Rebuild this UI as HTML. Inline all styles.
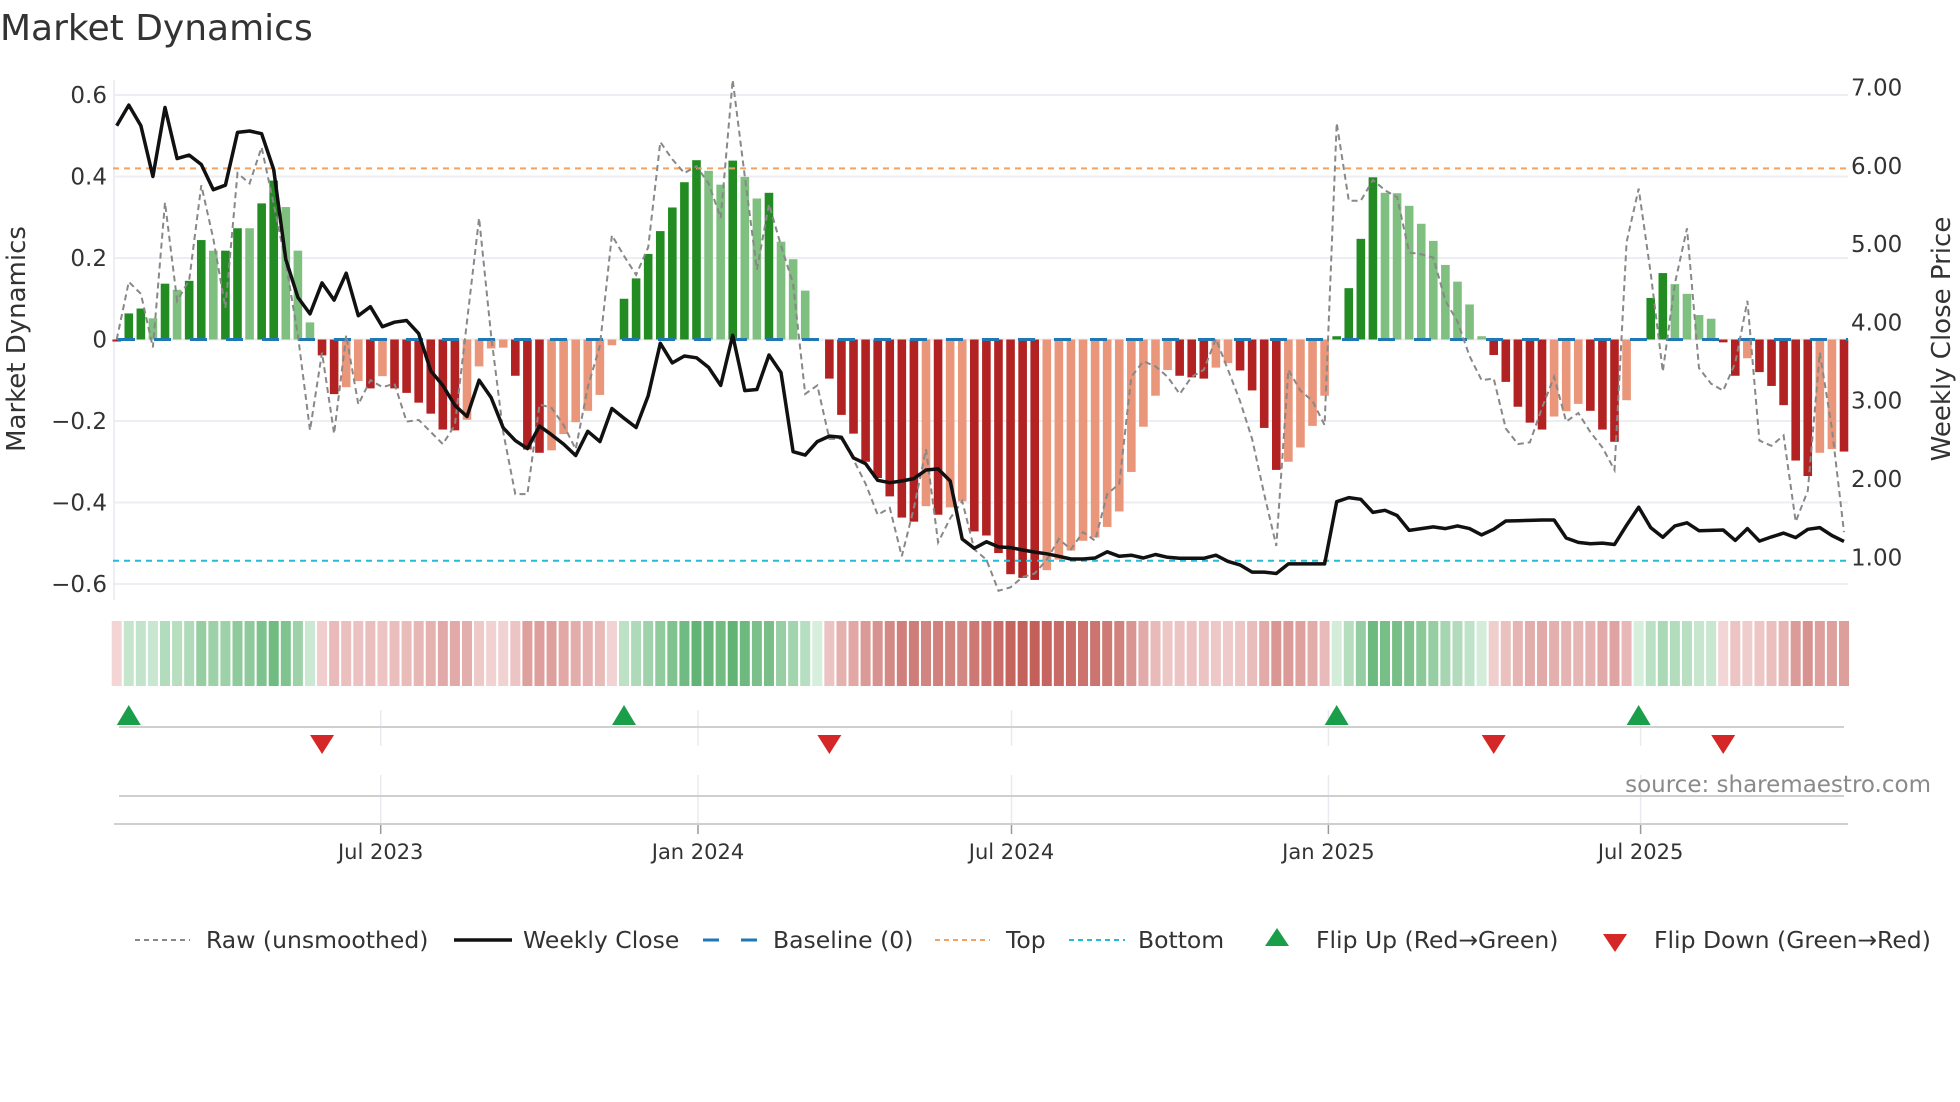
<!DOCTYPE html>
<html><head><meta charset="utf-8">
<style>
html,body{margin:0;padding:0;background:#fff;}
body{width:1960px;height:1102px;overflow:hidden;font-family:"DejaVu Sans","Liberation Sans",sans-serif;}
svg{display:block}
text{font-family:"DejaVu Sans","Liberation Sans",sans-serif;fill:#333}
</style></head><body>
<svg id="c" width="1960" height="1102" viewBox="0 0 1960 1102" xmlns="http://www.w3.org/2000/svg">
<text x="0" y="40" font-size="36" fill="#333">Market Dynamics</text>
<g id="grid"></g>
<g id="bars"></g>
<g id="strip"></g>
<g id="lines"></g>
<g font-size="23" text-anchor="end">
<text x="107" y="103">0.6</text>
<text x="107" y="184.5">0.4</text>
<text x="107" y="266">0.2</text>
<text x="107" y="347.5">0</text>
<text x="107" y="429">−0.2</text>
<text x="107" y="510.5">−0.4</text>
<text x="107" y="592">−0.6</text>
</g>
<g font-size="23" text-anchor="start">
<text x="1851" y="95.5">7.00</text>
<text x="1851" y="173.8">6.00</text>
<text x="1851" y="252">5.00</text>
<text x="1851" y="330.4">4.00</text>
<text x="1851" y="408.7">3.00</text>
<text x="1851" y="487">2.00</text>
<text x="1851" y="565.5">1.00</text>
</g>
<text transform="translate(25,339) rotate(-90)" font-size="26" text-anchor="middle">Market Dynamics</text>
<text transform="translate(1950,339) rotate(-90)" font-size="26" text-anchor="middle">Weekly Close Price</text>
<g font-size="21" text-anchor="middle">
<text x="380.7" y="859">Jul 2023</text>
<text x="698" y="859">Jan 2024</text>
<text x="1011.5" y="859">Jul 2024</text>
<text x="1328.4" y="859">Jan 2025</text>
<text x="1640.6" y="859">Jul 2025</text>
</g>
<text x="1931" y="792" font-size="23" text-anchor="end" style="fill:#8a8a8a">source: sharemaestro.com</text>
<g font-size="23.5">
<line x1="135" y1="940" x2="190" y2="940" stroke="#888" stroke-width="2" stroke-dasharray="5,4"/>
<text x="206" y="948">Raw (unsmoothed)</text>
<line x1="454" y1="940" x2="512" y2="940" stroke="#111" stroke-width="3.5"/>
<text x="523" y="948">Weekly Close</text>
<line x1="703" y1="940" x2="757" y2="940" stroke="#1f77b4" stroke-width="3" stroke-dasharray="16,22"/>
<text x="773" y="948">Baseline (0)</text>
<line x1="935" y1="940" x2="990" y2="940" stroke="#f4a261" stroke-width="2" stroke-dasharray="5,4"/>
<text x="1006" y="948">Top</text>
<line x1="1069" y1="940" x2="1125" y2="940" stroke="#22bcd6" stroke-width="2" stroke-dasharray="5,4"/>
<text x="1138" y="948">Bottom</text>
<polygon points="1265,946 1289,946 1277,928" fill="#1a9e4a"/>
<text x="1316" y="948">Flip Up (Red→Green)</text>
<polygon points="1603,934 1627,934 1615,952" fill="#d62728"/>
<text x="1654" y="948">Flip Down (Green→Red)</text>
</g>
</svg>
<script>
var V=[-0.005,0.064,0.076,0.052,0.137,0.122,0.144,0.244,0.218,0.218,0.273,0.273,0.334,0.39,0.325,0.218,0.042,-0.039,-0.134,-0.117,-0.102,-0.12,-0.09,-0.12,-0.131,-0.155,-0.182,-0.221,-0.223,-0.197,-0.066,-0.022,-0.02,-0.089,-0.27,-0.278,-0.272,-0.232,-0.203,-0.175,-0.136,-0.014,0.1,0.15,0.21,0.266,0.324,0.386,0.44,0.414,0.38,0.439,0.399,0.346,0.36,0.24,0.197,0.12,0,-0.096,-0.185,-0.231,-0.3,-0.34,-0.385,-0.437,-0.447,-0.409,-0.43,-0.412,-0.397,-0.471,-0.481,-0.524,-0.576,-0.585,-0.59,-0.566,-0.54,-0.518,-0.494,-0.486,-0.46,-0.422,-0.325,-0.214,-0.138,-0.075,-0.089,-0.093,-0.096,-0.069,-0.058,-0.076,-0.125,-0.217,-0.32,-0.3,-0.265,-0.212,-0.138,0.008,0.126,0.247,0.398,0.36,0.359,0.328,0.284,0.242,0.183,0.142,0.086,0.008,-0.038,-0.104,-0.165,-0.204,-0.221,-0.189,-0.176,-0.158,-0.175,-0.221,-0.251,-0.149,0,0.102,0.163,0.136,0.112,0.06,0.051,-0.007,-0.089,-0.046,-0.08,-0.114,-0.161,-0.297,-0.335,-0.278,-0.269,-0.275];
var DK=[1,1,1,0,1,0,1,1,0,1,1,0,1,1,0,0,0,1,1,0,0,1,0,1,1,1,1,1,1,0,0,0,0,1,1,1,0,0,0,0,0,0,1,1,1,1,1,1,1,0,0,1,0,0,1,0,0,0,0,1,1,1,1,1,1,1,1,0,1,0,0,1,1,1,1,1,1,0,0,0,0,0,0,0,0,0,0,0,1,1,1,0,0,1,1,1,1,0,0,0,0,1,1,1,1,0,0,0,0,0,0,0,0,0,1,1,1,1,1,0,0,0,1,1,1,0,0,1,1,0,0,0,0,1,1,0,1,1,1,1,1,0,0,1];
var P=[193,133,193,340,140,288,278,305,378,365,212,208,216,320,580,690,738,648,698,620,743,717,775,762,757,795,903,945,1003,1035,930,980,1068,1105,1128,1063,1088,
1115,1148,1078,1108,1012,1040,1067,975,823,880,860,865,893,945,800,960,957,857,908,1137,1147,1108,1092,1095,1155,1172,1220,1227,1222,1215,1190,1187,1222,1390,1417,1398,1413,
1415,1422,1428,1433,1440,1448,1448,1445,1427,1440,1437,1445,1435,1443,1446,1446,1446,1437,1455,1465,1486,1486,1490,1462,1462,1462,1462,1282,1270,1275,1313,1307,1322,1365,1360,1355,
1360,1352,1360,1378,1362,1338,1337,1336,1335,1335,1387,1400,1404,1402,1406,1350,1298,1357,1385,1352,1343,1366,1365,1364,1394,1360,1396,1384,1373,1386,1362,1357,1380,1397];
var R=[812,645,680,835,415,700,640,365,520,720,330,360,255,420,590,800,1075,850,1085,800,1000,930,950,940,1050,1045,1080,1115,1060,760,460,800,1080,1260,1260,1000,1010,
1060,1130,950,830,510,570,625,545,240,290,330,310,360,460,60,340,610,420,540,650,970,945,1100,1100,1160,1230,1320,1300,1440,1300,1130,1400,1330,1280,1420,1450,1540,
1530,1500,1490,1450,1390,1420,1370,1395,1260,1230,920,875,890,920,970,920,900,810,900,990,1100,1260,1410,900,960,990,1060,185,410,410,350,380,400,560,565,575,
700,760,860,930,925,1070,1115,1110,1010,920,1050,1025,1080,1125,1190,530,375,620,905,650,490,895,940,960,880,700,1105,1120,1090,1340,1250,850,1070,1370];
var NS="http://www.w3.org/2000/svg";
function el(p,t,a){var e=document.createElementNS(NS,t);for(var k in a)e.setAttribute(k,a[k]);document.getElementById(p).appendChild(e);return e;}
var X0=116.7,ST=12.079,Z=339.5,S=407.5;
function bx(k){return X0+ST*k;}
function zy(z){return 95+((60+z/3)-94.6)*1.0356;}
[95,176.5,258,339.5,421,502.5,584].forEach(function(y){el('grid','line',{x1:113,x2:1848,y1:y,y2:y,stroke:'#eceef3','stroke-width':2});});
el('grid','line',{x1:114,x2:114,y1:80,y2:600,stroke:'#eceef3','stroke-width':2});
[380.7,698,1011.5,1328.4,1640.6].forEach(function(x){
 el('grid','line',{x1:x,x2:x,y1:710,y2:746,stroke:'#e8eaf0','stroke-width':1.5});
 el('grid','line',{x1:x,x2:x,y1:775,y2:824,stroke:'#e8eaf0','stroke-width':1.5});
 el('grid','line',{x1:x,x2:x,y1:824,y2:834,stroke:'#999','stroke-width':1.5});
});
el('grid','line',{x1:119,x2:1844,y1:727,y2:727,stroke:'#cfcfcf','stroke-width':2});
el('grid','line',{x1:119,x2:1844,y1:796,y2:796,stroke:'#cfcfcf','stroke-width':2});
el('grid','line',{x1:114,x2:1848,y1:824,y2:824,stroke:'#cfcfcf','stroke-width':2});
function lerp(a,b,t){return Math.round(a+(b-a)*t);}
for(var k=0;k<V.length;k++){
 var v=V[k],x=bx(k),h=Math.abs(v)*S,y=v>=0?Z-h:Z;
 var col=v>=0?(DK[k]?'#228b22':'#7fbf7f'):(DK[k]?'#b22222':'#e9967a');
 if(h>0.3) el('bars','rect',{x:x-4.3,y:y,width:8.6,height:h,fill:col});
 var t,c;
 if(v>=0){t=Math.min(1,v/0.44);c='rgb('+lerp(214,98,t)+','+lerp(238,180,t)+','+lerp(220,116,t)+')';}
 else{t=Math.min(1,-v/0.59);c='rgb('+lerp(243,196,t)+','+lerp(214,96,t)+','+lerp(214,90,t)+')';}
 el('strip','rect',{x:x-5,y:621,width:10,height:65,fill:c});
}
el('lines','line',{x1:113,x2:1848,y1:168.4,y2:168.4,stroke:'#f4a261','stroke-width':2,'stroke-dasharray':'6,5'});
el('lines','line',{x1:113,x2:1848,y1:560.8,y2:560.8,stroke:'#22bcd6','stroke-width':2,'stroke-dasharray':'6,5'});
el('lines','line',{x1:118,x2:1848,y1:Z,y2:Z,stroke:'#1f77b4','stroke-width':3,'stroke-dasharray':'17,19'});
function pts(A){return A.map(function(z,k){return bx(k).toFixed(1)+','+zy(z).toFixed(1);}).join(' ');}
el('lines','polyline',{points:pts(R),fill:'none',stroke:'#888','stroke-width':2,'stroke-dasharray':'6,4'});
el('lines','polyline',{points:pts(P),fill:'none',stroke:'#111','stroke-width':3.5,'stroke-linejoin':'round'});
[1,42,101,126].forEach(function(k){var x=bx(k);el('lines','polygon',{points:(x-12)+',725 '+(x+12)+',725 '+x+',705',fill:'#1a9e4a'});});
[17,59,114,133].forEach(function(k){var x=bx(k);el('lines','polygon',{points:(x-12)+',735 '+(x+12)+',735 '+x+',754',fill:'#d62728'});});
</script>
</body></html>
